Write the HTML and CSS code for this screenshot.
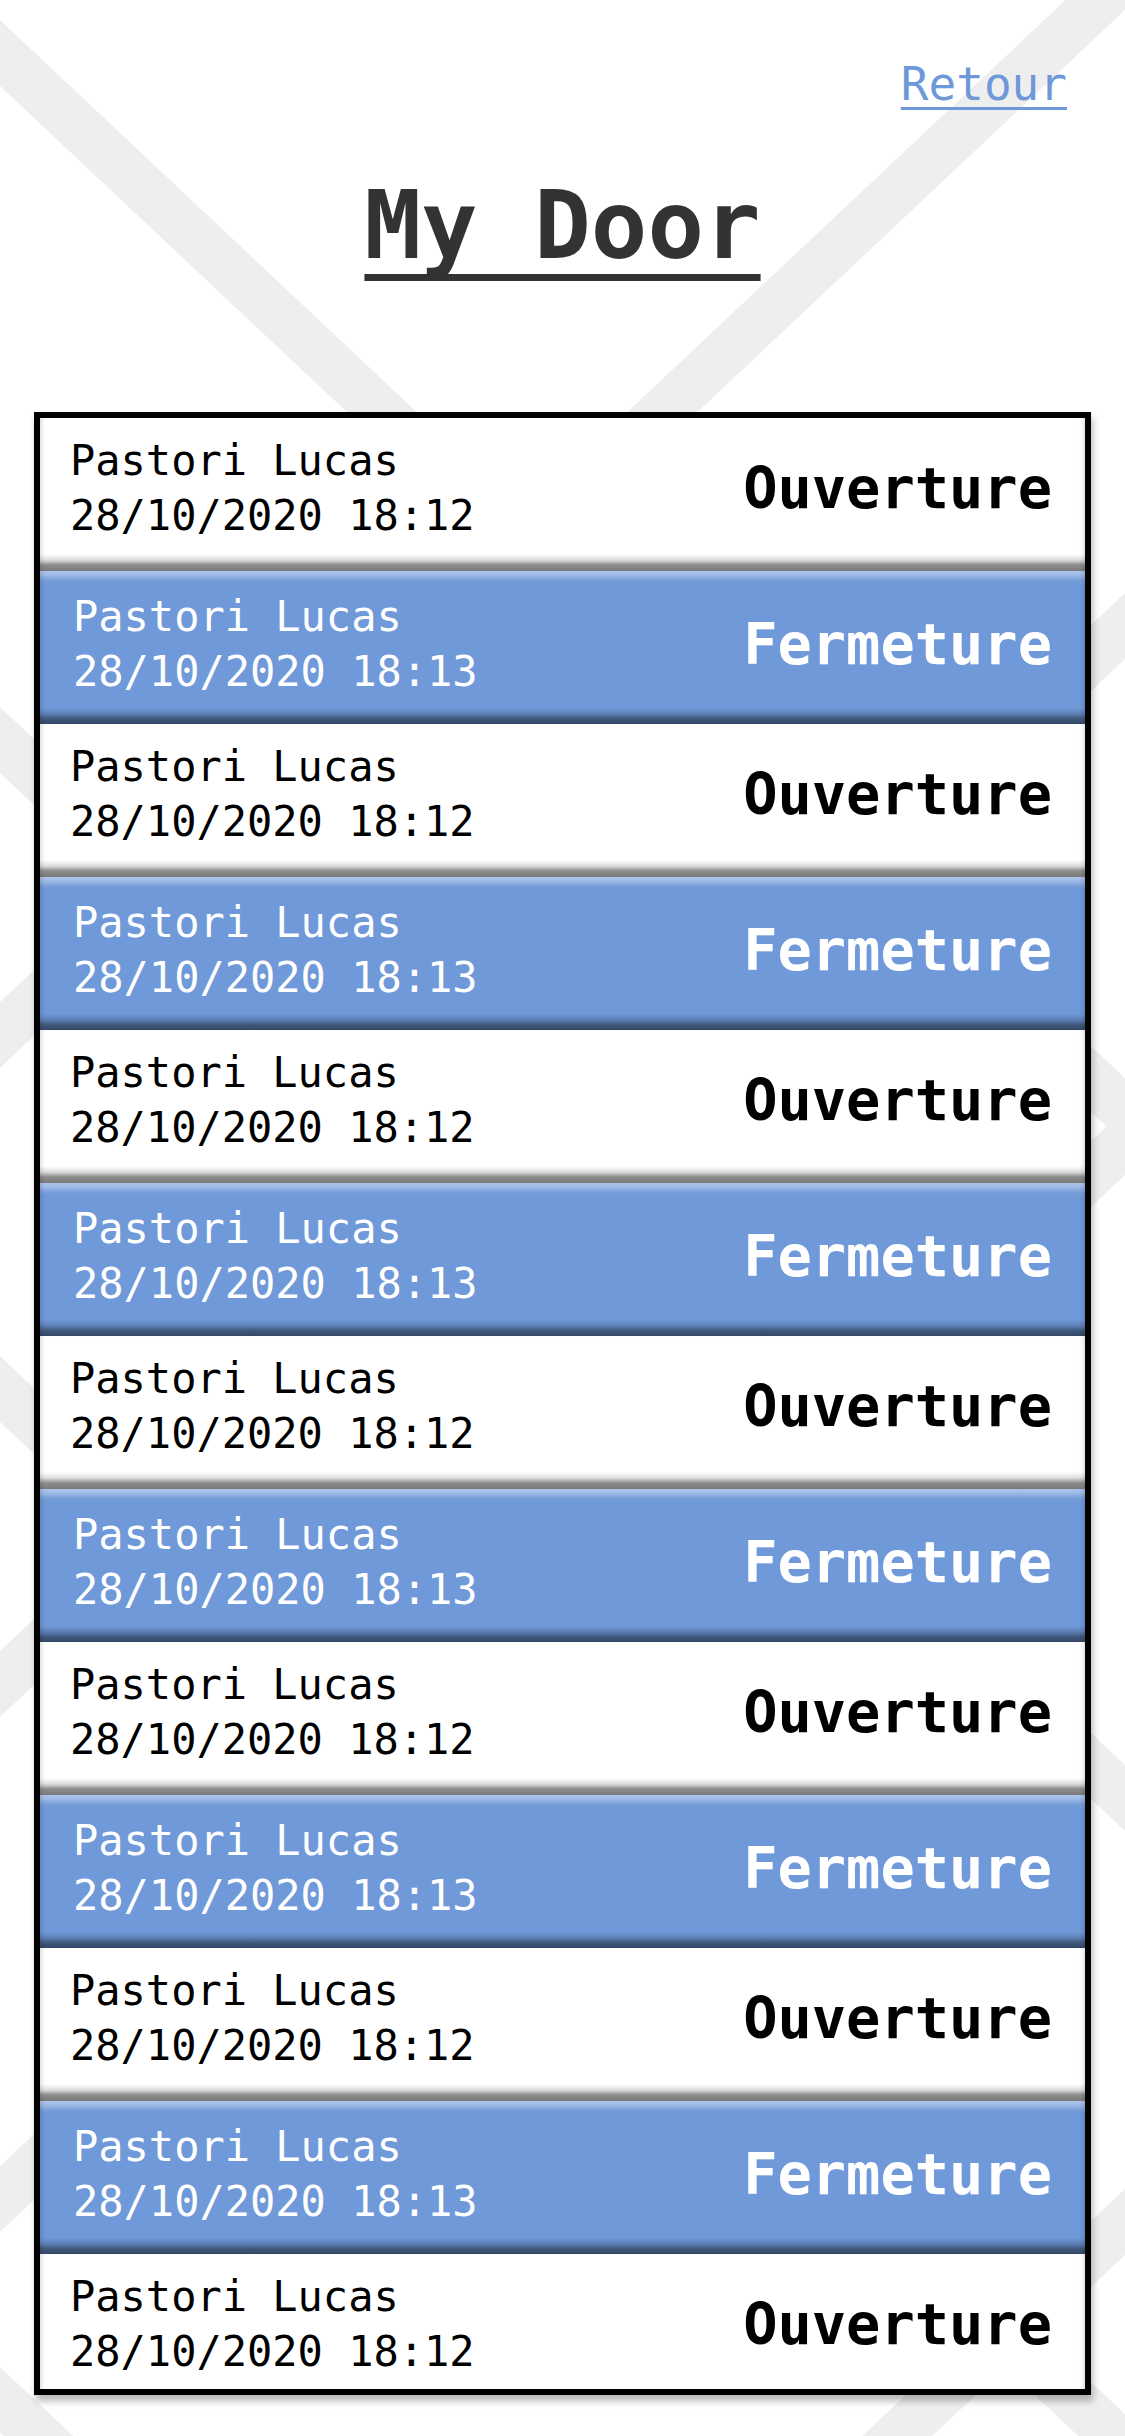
FILE: index.html
```html
<!DOCTYPE html>
<html lang="fr">
<head>
<meta charset="utf-8">
<title>My Door</title>
<link rel="stylesheet" href="styles.css">
</head>
<body>
  <header class="topbar">
    <a class="back" href="#">Retour</a>
  </header>
  <h1 class="title">My Door</h1>
  <section class="log">
    <div class="entry open"><div class="who"><span>Pastori Lucas</span><span>28/10/2020 18:12</span></div><div class="action">Ouverture</div></div>
    <div class="entry close"><div class="who"><span>Pastori Lucas</span><span>28/10/2020 18:13</span></div><div class="action">Fermeture</div></div>
    <div class="entry open"><div class="who"><span>Pastori Lucas</span><span>28/10/2020 18:12</span></div><div class="action">Ouverture</div></div>
    <div class="entry close"><div class="who"><span>Pastori Lucas</span><span>28/10/2020 18:13</span></div><div class="action">Fermeture</div></div>
    <div class="entry open"><div class="who"><span>Pastori Lucas</span><span>28/10/2020 18:12</span></div><div class="action">Ouverture</div></div>
    <div class="entry close"><div class="who"><span>Pastori Lucas</span><span>28/10/2020 18:13</span></div><div class="action">Fermeture</div></div>
    <div class="entry open"><div class="who"><span>Pastori Lucas</span><span>28/10/2020 18:12</span></div><div class="action">Ouverture</div></div>
    <div class="entry close"><div class="who"><span>Pastori Lucas</span><span>28/10/2020 18:13</span></div><div class="action">Fermeture</div></div>
    <div class="entry open"><div class="who"><span>Pastori Lucas</span><span>28/10/2020 18:12</span></div><div class="action">Ouverture</div></div>
    <div class="entry close"><div class="who"><span>Pastori Lucas</span><span>28/10/2020 18:13</span></div><div class="action">Fermeture</div></div>
    <div class="entry open"><div class="who"><span>Pastori Lucas</span><span>28/10/2020 18:12</span></div><div class="action">Ouverture</div></div>
    <div class="entry close"><div class="who"><span>Pastori Lucas</span><span>28/10/2020 18:13</span></div><div class="action">Fermeture</div></div>
    <div class="entry open"><div class="who"><span>Pastori Lucas</span><span>28/10/2020 18:12</span></div><div class="action">Ouverture</div></div>
  </section>
</body>
</html>
```
FILE: styles.css
```css
html, body {
  margin: 0;
  padding: 0;
}

body {
  min-height: 2436px;
  font-family: "DejaVu Sans Mono", "Liberation Mono", monospace;
  color: #000;
  background: #fff url("data:image/svg+xml,%3Csvg xmlns='http://www.w3.org/2000/svg' width='1125' height='2436' viewBox='0 0 1125 2436'%3E%3Cg stroke='%23eeeeee' stroke-width='48' fill='none'%3E%3Cpath d='M-100 -41 L1225 1205'/%3E%3Cpath d='M-100 646 L1225 1892'/%3E%3Cpath d='M-100 1295 L1225 2541'/%3E%3Cpath d='M-100 2306 L1225 3552'/%3E%3Cpath d='M-100 1129 L1225 -117'/%3E%3Cpath d='M-100 1778 L1225 532'/%3E%3Cpath d='M-100 2293 L1225 1048'/%3E%3Cpath d='M-100 3373 L1225 2128'/%3E%3C/g%3E%3C/svg%3E") no-repeat 0 0;
}

.topbar {
  display: flex;
  justify-content: flex-end;
  padding: 57px 58px 0 0;
}

.back {
  font-size: 46px;
  line-height: 54px;
  color: #6f98d8;
  text-decoration: underline;
  text-decoration-thickness: 3px;
  text-underline-offset: 7px;
}

.title {
  margin: 60px 0 0;
  text-align: center;
  font-size: 94px;
  line-height: 110px;
  font-weight: bold;
  color: #333;
  text-decoration: underline;
  text-decoration-thickness: 7px;
  text-underline-offset: 16px;
  text-decoration-skip-ink: none;
}

.log {
  margin: 131px 34px 0;
  height: 1983px;
  box-sizing: border-box;
  border: 6px solid #000;
  overflow: hidden;
  background: #fff;
  box-shadow: 2px 6px 7px rgba(0, 0, 0, 0.28);
}

.entry {
  height: 153px;
  box-sizing: border-box;
  display: flex;
  justify-content: space-between;
  align-items: center;
  padding: 0 33px 14px 30px;
}

.entry.open {
  color: #000;
  background: linear-gradient(#fff 0, #fff calc(100% - 17px), #dcdcdc calc(100% - 11px), #8c8c8c calc(100% - 6px), #7a7a7a 100%);
  box-shadow: inset 5px 0 5px -4px rgba(0, 0, 0, 0.18), inset -5px 0 5px -4px rgba(0, 0, 0, 0.18);
}

.entry.close {
  color: #fff;
  padding: 0 33px 8px 33px;
  background: linear-gradient(#adc6ec 0, #9ebbe7 4px, #7a9fdb 9px, #7099d9 13px, #7099d9 calc(100% - 16px), #5b7db3 calc(100% - 10px), #3f5678 calc(100% - 5px), #34496a 100%);
  box-shadow: inset 5px 0 5px -4px rgba(0, 0, 0, 0.2), inset -5px 0 5px -4px rgba(0, 0, 0, 0.2);
}

.who {
  display: flex;
  flex-direction: column;
  font-size: 42px;
  line-height: 55px;
}

.action {
  font-size: 57px;
  font-weight: bold;
}
```
